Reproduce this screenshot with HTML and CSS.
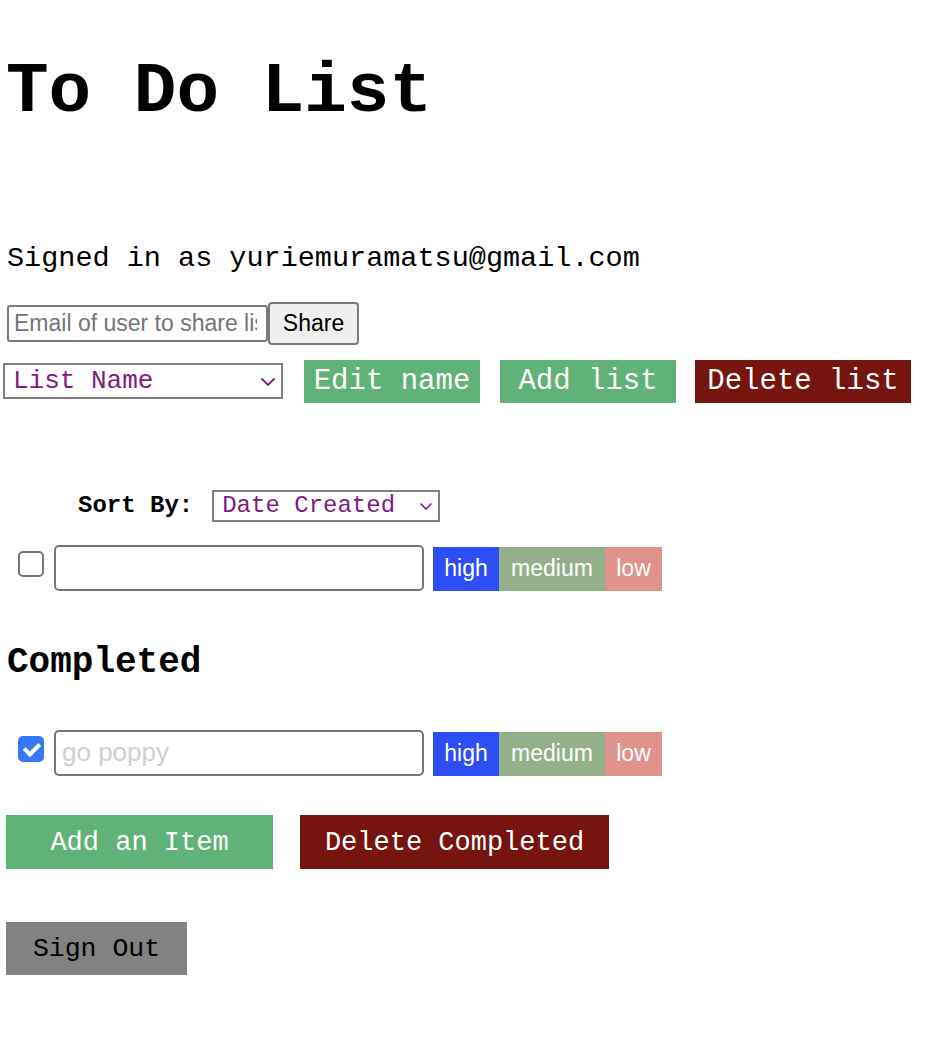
FILE: index.html
```html
<!DOCTYPE html>
<html lang="en">
<head>
<meta charset="utf-8">
<title>To Do List</title>
<link rel="stylesheet" href="styles.css">
</head>
<body>
<div class="page">
  <h1 class="title">To Do List</h1>
  <p class="signed">Signed in as yuriemuramatsu@gmail.com</p>

  <div class="share-row">
    <input class="share-input" type="text" placeholder="Email of user to share list with">
    <button class="share-btn">Share</button>
  </div>

  <div class="list-row">
    <div class="select-wrap list-select">
      <select class="select"><option>List Name</option></select>
      <svg class="chev" width="16" height="10" viewBox="0 0 16 10"><path d="M1.5 1.5 L8 8 L14.5 1.5" fill="none" stroke="#7f1a80" stroke-width="1.8"/></svg>
    </div>
    <button class="btn green btn-edit">Edit name</button>
    <button class="btn green btn-add">Add list</button>
    <button class="btn red btn-del">Delete list</button>
  </div>

  <div class="sort-row">
    <span class="sort-label">Sort By:</span>
    <div class="select-wrap sort-select">
      <select class="select"><option>Date Created</option></select>
      <svg class="chev" width="14" height="9" viewBox="0 0 14 9"><path d="M1.5 1.5 L7 7 L12.5 1.5" fill="none" stroke="#7f1a80" stroke-width="1.6"/></svg>
    </div>
  </div>

  <div class="item-row">
    <input class="check" type="checkbox">
    <input class="item-input" type="text">
    <div class="prio">
      <button class="pbtn high">high</button>
      <button class="pbtn medium">medium</button>
      <button class="pbtn low">low</button>
    </div>
  </div>

  <h2 class="completed">Completed</h2>

  <div class="item-row item-row-done">
    <input class="check" type="checkbox" checked>
    <input class="item-input done" type="text" value="go poppy">
    <div class="prio">
      <button class="pbtn high">high</button>
      <button class="pbtn medium">medium</button>
      <button class="pbtn low">low</button>
    </div>
  </div>

  <div class="action-row">
    <button class="btn green btn-additem">Add an Item</button>
    <button class="btn red btn-delcomp">Delete Completed</button>
  </div>

  <button class="btn gray btn-signout">Sign Out</button>
</div>
</body>
</html>
```

FILE: styles.css
```css
* { box-sizing: border-box; }

body {
  margin: 0;
  background: #fff;
  color: #000;
  font-family: "Liberation Mono", "Courier New", monospace;
}

.page {
  padding: 0 0 40px 6px;
}

.title {
  margin: 57px 0 0 0;
  font-size: 71px;
  line-height: 1;
  font-weight: bold;
}

.signed {
  margin: 117px 0 0 1px;
  font-size: 28.5px;
  line-height: 1;
}

.share-row {
  display: flex;
  align-items: center;
  margin-top: 28px;
  margin-left: 1px;
}

.share-input {
  width: 261px;
  height: 37px;
  border: 2px solid #7a7a7a;
  border-radius: 3px;
  padding: 0 9px 0 5px;
  font-family: "Liberation Sans", Arial, sans-serif;
  font-size: 23px;
  color: #000;
}
.share-input::placeholder { color: #757575; }

.share-btn {
  width: 91px;
  height: 43px;
  background: #efefef;
  border: 2px solid #7a7a7a;
  border-radius: 4px;
  font-family: "Liberation Sans", Arial, sans-serif;
  font-size: 23px;
  color: #000;
  padding: 0;
}

.list-row {
  display: flex;
  align-items: center;
  margin-top: 15px;
  margin-left: -3px;
}

.select-wrap {
  position: relative;
}

.select {
  appearance: none;
  -webkit-appearance: none;
  display: block;
  background: #fff;
  border: 2px solid #808080;
  border-radius: 0;
  color: #7f1a80;
  font-family: "Liberation Mono", "Courier New", monospace;
  padding: 0 0 0 8px;
  margin: 0;
}

.chev {
  position: absolute;
  pointer-events: none;
}

.list-select .select {
  width: 280px;
  height: 36px;
  font-size: 26px;
}
.list-select .chev { right: 7px; top: 14px; }

.btn {
  border: none;
  border-radius: 0;
  color: #fff;
  font-family: "Liberation Mono", "Courier New", monospace;
  padding: 0;
  display: flex;
  align-items: center;
  justify-content: center;
}

.green { background: #61b278; }
.red { background: #761410; }
.gray { background: #828282; color: #000; }

.btn-edit, .btn-add, .btn-del {
  height: 43px;
  font-size: 29px;
}
.btn-edit { width: 176px; margin-left: 21px; }
.btn-add { width: 176px; margin-left: 20px; }
.btn-del { width: 216px; margin-left: 19px; }

.sort-row {
  display: flex;
  align-items: center;
  margin-top: 87px;
  padding-left: 72px;
}

.sort-label {
  font-weight: bold;
  font-size: 24px;
  line-height: 1;
}

.sort-select { margin-left: 19px; }
.sort-select .select {
  width: 228px;
  height: 32px;
  font-size: 24px;
}
.sort-select .chev { right: 7px; top: 12px; }

.item-row {
  display: flex;
  align-items: center;
  margin-top: 23px;
}

.check {
  appearance: none;
  -webkit-appearance: none;
  width: 26px;
  height: 26px;
  margin: 0 0 0 12px;
  align-self: flex-start;
  margin-top: 6px;
  border: 2px solid #767676;
  border-radius: 5px;
  background: #fff;
  position: relative;
}
.check:checked {
  background: #3478f6;
  border-color: #3478f6;
}
.check:checked::after {
  content: "";
  position: absolute;
  left: 7px;
  top: 2px;
  width: 6px;
  height: 12px;
  border: solid #fff;
  border-width: 0 4px 4px 0;
  transform: rotate(45deg);
}

.item-input {
  width: 370px;
  height: 46px;
  margin-left: 10px;
  border: 2px solid #767676;
  border-radius: 5px;
  padding: 0 6px;
  font-family: "Liberation Sans", Arial, sans-serif;
  font-size: 26px;
  color: #000;
}
.item-input.done { color: #cfcfcf; }

.prio {
  display: flex;
  margin-left: 9px;
  margin-top: 2px;
}

.pbtn {
  height: 44px;
  border: none;
  border-radius: 0;
  padding: 0 11px;
  color: #fff;
  font-family: "Liberation Sans", Arial, sans-serif;
  font-size: 23px;
}
.high { background: #2d4ef5; width: 66px; }
.medium { background: #93b08a; width: 106px; }
.low { background: #e0928d; width: 57px; }

.completed {
  margin: 54px 0 0 1px;
  font-size: 36px;
  line-height: 1;
  font-weight: bold;
}

.item-row-done { margin-top: 49px; }

.action-row {
  display: flex;
  margin-top: 39px;
}

.btn-additem {
  width: 267px;
  height: 54px;
  font-size: 27px;
  padding-top: 3px;
}
.btn-delcomp {
  width: 309px;
  height: 54px;
  margin-left: 27px;
  font-size: 27px;
  padding-top: 3px;
}

.btn-signout {
  margin-top: 53px;
  width: 181px;
  height: 53px;
  font-size: 26.5px;
  padding-top: 2px;
}
```
